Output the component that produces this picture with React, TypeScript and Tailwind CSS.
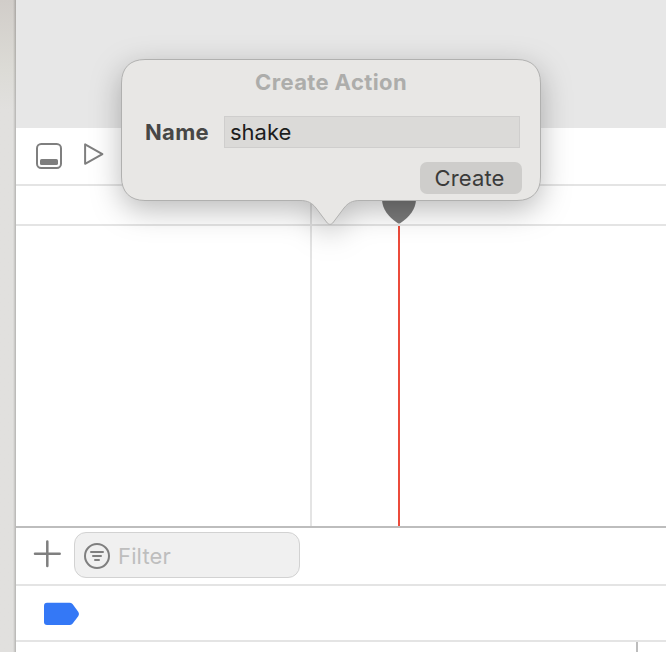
function PanelIcon() {
  return (
    <svg className="block" width="26" height="26" viewBox="0 0 26 26" fill="none">
      <rect x="1" y="1" width="24" height="24" rx="4.2" stroke="#7f7f7f" strokeWidth="2" />
      <rect x="4" y="16" width="18" height="6" rx="1.6" fill="#7f7f7f" />
    </svg>
  );
}

function PlayIcon() {
  return (
    <svg className="block" width="20" height="22" viewBox="0 0 20 22" fill="none">
      <path d="M1.1 1.4V20.8L18.4 11.1Z" stroke="#7f7f7f" strokeWidth="2" strokeLinejoin="round" />
    </svg>
  );
}

function PlusIcon() {
  return (
    <svg className="block" width="28" height="28" viewBox="0 0 28 28" fill="none">
      <path d="M14.3 1.5V26M2 13.7H26.7" stroke="#7f7f7f" strokeWidth="2.5" strokeLinecap="round" />
    </svg>
  );
}

function FilterIcon() {
  return (
    <svg className="block shrink-0" width="26" height="26" viewBox="0 0 26 26" fill="none" stroke="#7f7f7f" strokeLinecap="round">
      <circle cx="13" cy="13" r="12" strokeWidth="2" />
      <path d="M7 9H19M9 13H17M11 17H15" strokeWidth="2" />
    </svg>
  );
}

function CreateActionPopover() {
  return (
    <div className="absolute left-[121px] top-[59px] h-[142px] w-[420px]">
      <svg
        className="absolute left-0 top-0 overflow-visible drop-shadow-[0_9px_15px_rgba(0,0,0,0.27)]"
        width="420"
        height="168"
        viewBox="0 0 420 168"
      >
        <path
          d="M24 .5H396C411 .5 419.5 9 419.5 24V118C419.5 133 411 141.5 396 141.5H239C231 141.5 227 144 223 149L212.5 163C210.3 166.2 207.7 166.2 205.5 163L195 149C191 144 187 141.5 179 141.5H24C9 141.5 .5 133 .5 118V24C.5 9 9 .5 24 .5Z"
          fill="#e8e7e5"
          stroke="#b0b0af"
        />
      </svg>
      <div className="relative flex h-full flex-col pl-6 pr-[19px] text-[22px] leading-[30px]">
        <h1 className="mt-2 pr-[5px] text-center text-[22px] font-bold tracking-[0.38px] text-[#adadab]">Create Action</h1>
        <div className="mt-[19px] flex h-8 items-center">
          <label className="w-[79px] font-bold tracking-[0.3px] text-[#474746]">Name</label>
          <div className="h-8 w-[296px] border border-[#cfcecd] bg-[#dbdad8] pl-[5px] text-[#1d1d1d]">shake</div>
        </div>
        <button className="mt-[14px] h-8 w-[102px] self-end rounded-[7px] bg-[#cecdcb] pr-[3px] text-center tracking-[0.1px] text-[#3b3b3a]">Create</button>
      </div>
    </div>
  );
}

export default function App() {
  return (
    <div className="relative flex h-[652px] w-[666px] overflow-hidden bg-white font-['Inter','Liberation_Sans',sans-serif]">
      <aside className="flex w-4 shrink-0 justify-end bg-linear-to-b from-[#d1cdc9] via-[#dcdbd6] via-[70px] to-[#e1e0de] to-[110px]">
        <div className="w-[3px] bg-linear-to-r from-transparent to-black/20" />
      </aside>
      <main className="flex min-w-0 flex-1 flex-col">
        <div className="h-32 shrink-0 bg-[#e7e7e7]" />
        <div className="flex h-[58px] shrink-0 items-center border-b-2 border-[#e4e4e4] pl-5">
          <PanelIcon />
          <div className="ml-[22px] -mt-1">
            <PlayIcon />
          </div>
        </div>
        <div className="flex h-10 shrink-0 border-b-2 border-[#e4e4e4]">
          <div className="w-[296px] border-r-2 border-[#e4e4e4]" />
          <svg className="ml-[70px] mt-[2px] block" width="34" height="36" viewBox="0 0 34 36">
            <path d="M0 0H34V12C33.5 21 28 28.5 18.5 35Q17 36 15.5 35C6 28.5 .5 21 0 12Z" fill="#7b7b7b" />
          </svg>
        </div>
        <div className="flex h-[302px] shrink-0 border-b-2 border-[#bdbdbd]">
          <div className="w-[296px] border-r-2 border-[#e4e4e4]" />
          <div className="ml-[86px] w-[2px] bg-[#ec4b3b]" />
        </div>
        <div className="flex h-[58px] shrink-0 items-center border-b-2 border-[#e4e4e4] pl-[17px]">
          <div className="-mt-1">
            <PlusIcon />
          </div>
          <div className="-mt-[2px] ml-[13px] flex h-[46px] w-[226px] items-center rounded-[12px] border border-[#d2d2d2] bg-[#f0f0f0] pl-[9px] pt-[2px] text-[22px] text-[#bebebe]">
            <FilterIcon />
            <span className="ml-2 tracking-[0.15px]">Filter</span>
          </div>
        </div>
        <div className="flex h-14 shrink-0 items-center border-b-2 border-[#e4e4e4] pl-7 pt-[2px]">
          <svg className="block" width="36" height="24" viewBox="0 0 36 24">
            <path d="M3 .7H25.5Q27.3.7 28.5 2L34.4 10Q35.6 12 34.4 14L28.5 21.7Q27.3 23 25.5 23H3Q0 23 0 20V3.7Q0 .7 3 .7Z" fill="#3478f6" />
          </svg>
        </div>
        <div className="flex flex-1">
          <div className="w-[622px] border-r-2 border-[#bdbdbd]" />
        </div>
      </main>
      <CreateActionPopover />
    </div>
  );
}
